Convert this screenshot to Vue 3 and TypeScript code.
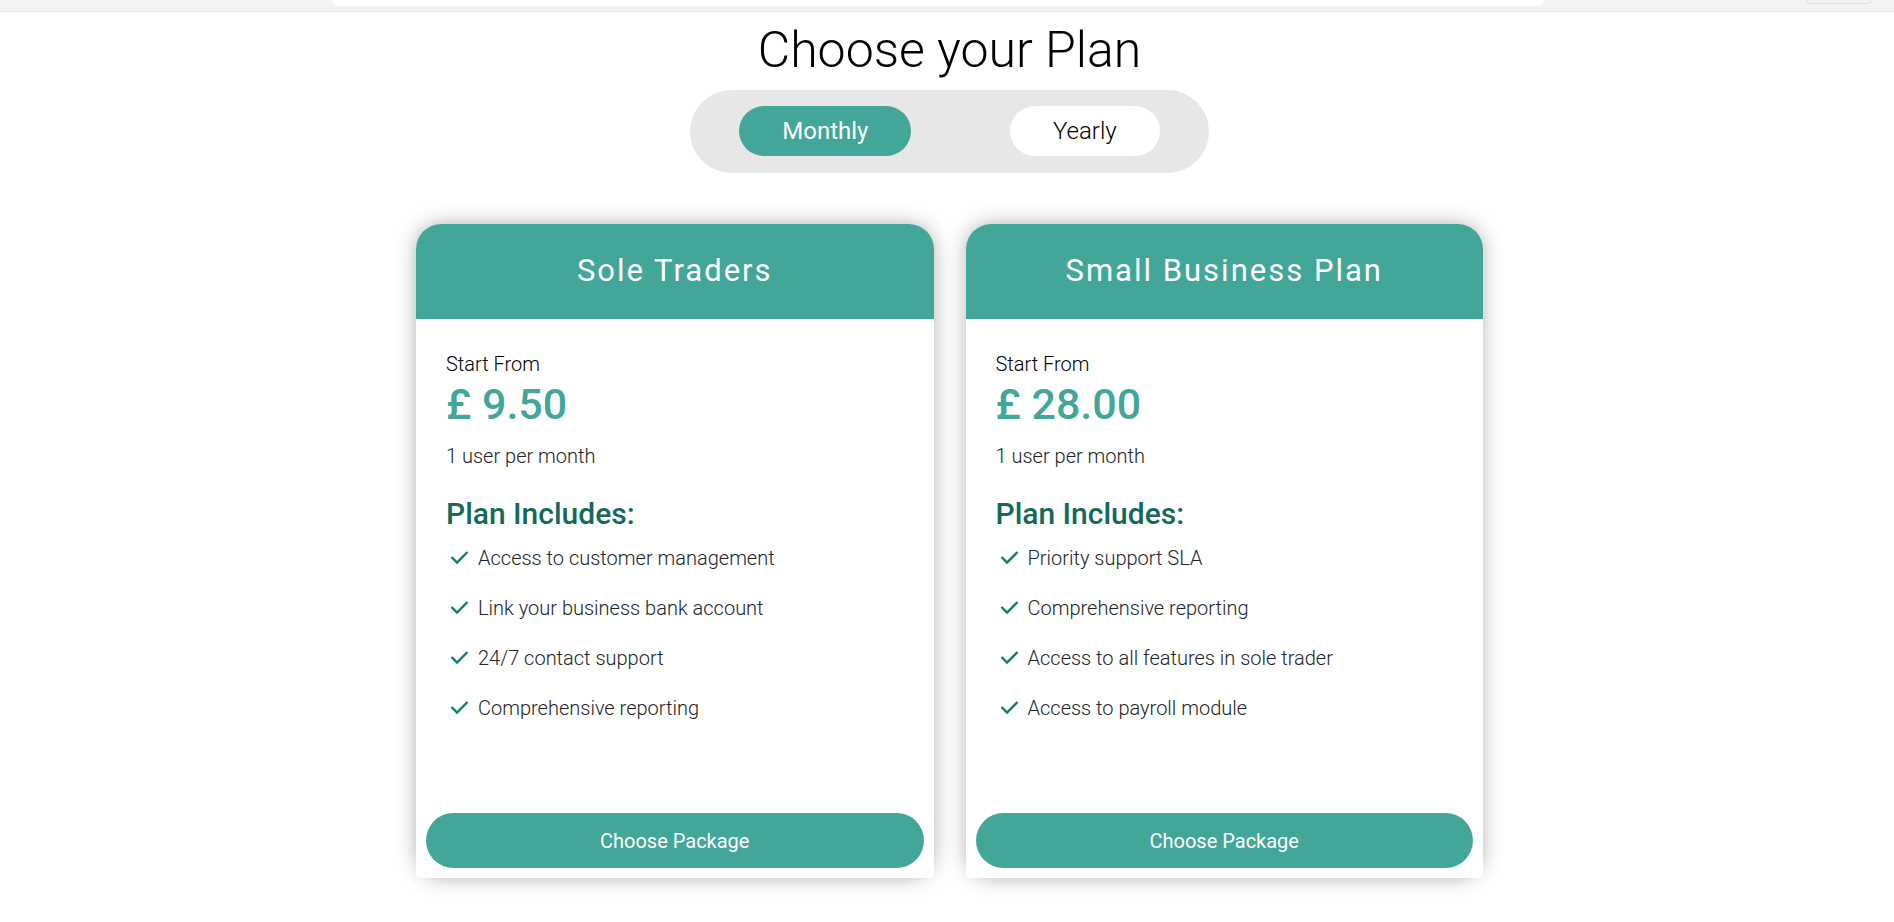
<script setup lang="ts">
import { ref } from 'vue'

interface Plan {
  name: string
  price: string
  term: string
  features: string[]
}

type Billing = 'Monthly' | 'Yearly'

const options: Billing[] = ['Monthly', 'Yearly']
const billing = ref<Billing>('Monthly')

const plans: Plan[] = [
  {
    name: 'Sole Traders',
    price: '£ 9.50',
    term: '1 user per month',
    features: [
      'Access to customer management',
      'Link your business bank account',
      '24/7 contact support',
      'Comprehensive reporting',
    ],
  },
  {
    name: 'Small Business Plan',
    price: '£ 28.00',
    term: '1 user per month',
    features: [
      'Priority support SLA',
      'Comprehensive reporting',
      'Access to all features in sole trader',
      'Access to payroll module',
    ],
  },
]
</script>

<template>
  <div class="page">
    <header class="topbar">
      <div class="field"></div>
      <div class="chip"></div>
    </header>
    <main class="pricing">
      <h1 class="title">Choose your Plan</h1>
      <div class="toggle" role="group" aria-label="Billing period">
        <button
          v-for="option in options"
          :key="option"
          type="button"
          class="option"
          :class="{ active: billing === option }"
          :aria-pressed="billing === option"
          @click="billing = option"
        >{{ option }}</button>
      </div>
      <div class="plans">
        <section v-for="plan in plans" :key="plan.name" class="card">
          <h2 class="name">{{ plan.name }}</h2>
          <div class="details">
            <p class="from">Start From</p>
            <p class="price">{{ plan.price }}</p>
            <p class="term">{{ plan.term }}</p>
            <h3 class="includes">Plan Includes:</h3>
            <ul class="features">
              <li v-for="feature in plan.features" :key="feature" class="feature">
                <svg class="check" viewBox="0 0 24 24" aria-hidden="true">
                  <path d="M3.5 11l5.5 5.5L19.5 6" />
                </svg>
                <span>{{ feature }}</span>
              </li>
            </ul>
          </div>
          <div class="action">
            <button type="button" class="choose">Choose Package</button>
          </div>
        </section>
      </div>
    </main>
  </div>
</template>

<style>
body {
  margin: 0;
  background: #fff;
}
</style>

<style scoped>
.page {
  font-family: Roboto, "Liberation Sans", sans-serif;
  font-weight: 300;
  color: #000;
}
h1, h2, h3, p, ul {
  margin: 0;
  padding: 0;
}
button {
  border: 0;
  font-family: inherit;
  cursor: pointer;
}
.topbar {
  position: relative;
  display: flex;
  justify-content: center;
  box-sizing: border-box;
  height: 12px;
  background: #f2f3f5;
  border-bottom: 1px solid #e6e6e6;
}
.field {
  width: 64%;
  height: 6px;
  margin-right: 18px;
  background: #fff;
  border-radius: 0 0 12px 12px;
}
.chip {
  position: absolute;
  top: 0;
  right: 23px;
  box-sizing: border-box;
  width: 64px;
  height: 4px;
  border: 1px solid #d3dfe9;
  border-top: 0;
  border-radius: 0 0 10px 10px;
}
.pricing {
  display: flex;
  flex-direction: column;
  align-items: center;
  padding: 8px 16px 32px 21px;
}
.title {
  font-size: 50px;
  line-height: 60px;
  font-weight: 300;
}
.toggle {
  display: flex;
  justify-content: space-around;
  align-items: center;
  box-sizing: border-box;
  width: 100%;
  max-width: 519px;
  margin-top: 10px;
  padding: 16px 0 17px;
  background: #e7e7e7;
  border-radius: 42px;
}
.option {
  height: 50px;
  padding: 0 43px;
  border-radius: 25px;
  background: #fff;
  color: #000;
  font-size: 24px;
  font-weight: 300;
}
.option.active {
  background: #42a698;
  color: #fff;
  font-weight: 400;
}
.plans {
  display: grid;
  grid-template-columns: repeat(auto-fit, minmax(320px, 1fr));
  gap: 32px;
  width: 100%;
  max-width: 1067px;
  margin-top: 51px;
}
.card {
  display: flex;
  flex-direction: column;
  border-radius: 25px;
  box-shadow: 0 0 20px rgba(0, 0, 0, 0.3);
}
.name {
  padding: 29px 0 30px;
  border-radius: 25px 25px 0 0;
  background: #42a698;
  color: #fff;
  font-size: 31px;
  line-height: 36px;
  font-weight: 400;
  letter-spacing: 2px;
  text-align: center;
}
.details {
  flex: 1;
  padding: 33px 30px 80px;
  background: #fff;
}
.from {
  font-size: 20px;
  line-height: 24px;
}
.price {
  margin-top: 3px;
  color: #42a698;
  font-size: 43px;
  line-height: 50px;
  font-weight: 500;
}
.term {
  margin-top: 15px;
  color: #212529;
  font-size: 20px;
  line-height: 24px;
}
.includes {
  margin-top: 28px;
  color: #15685c;
  font-size: 30px;
  line-height: 36px;
  font-weight: 500;
}
.features {
  margin-top: 1px;
  list-style: none;
}
.feature {
  display: flex;
  align-items: center;
  height: 50px;
  padding-left: 2px;
  color: #212529;
  font-size: 20px;
}
.check {
  width: 24px;
  height: 24px;
  margin-right: 6px;
  fill: none;
  stroke: #0d7d6c;
  stroke-width: 2.4;
}
.action {
  padding: 0 10px 10px;
  border-radius: 0 0 4px 4px;
  background: #fff;
}
.choose {
  display: block;
  width: 100%;
  height: 55px;
  border-radius: 28px;
  background: #42a698;
  color: #fff;
  font-size: 20px;
  font-weight: 400;
}
</style>
